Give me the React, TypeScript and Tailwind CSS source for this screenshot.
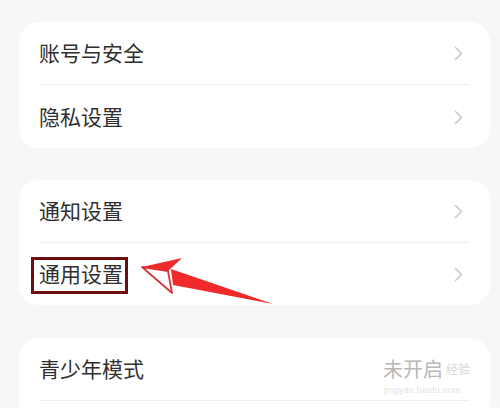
import React from 'react';

const font = { fontFamily: '"Noto Sans CJK SC", "Noto Sans", sans-serif' };

function Chevron() {
  return (
    <svg width="9" height="15" viewBox="0 0 9 15" className="shrink-0">
      <path d="M1.5 1.5l6 6-6 6" fill="none" stroke="#c9c9c9" strokeWidth="1.6" strokeLinecap="round" strokeLinejoin="round" />
    </svg>
  );
}

function Row({ label, value, boxed }: { label: string; value?: string; boxed?: boolean }) {
  return (
    <div className="relative flex h-[62px] items-center justify-between pl-[20px] pr-[27px]">
      <span className="-mt-[2px] text-[21px] leading-none text-[#2f2f2f]">{label}</span>
      {value ? (
        <span className="mr-[20px] text-[20px] leading-none text-[#b8b8b8]">{value}</span>
      ) : (
        <Chevron />
      )}
      {boxed && (
        <div className="absolute left-[12px] top-[14px] h-[37px] w-[97px] border-[3px] border-[#6e0d10]" />
      )}
    </div>
  );
}

function Divider() {
  return <div className="mx-[21px] h-px bg-[#eeeeee]" />;
}

export default function App() {
  return (
    <div className="relative h-[408px] w-[500px] overflow-hidden bg-[#f7f7f7] pt-[22px]" style={font}>
      <div className="ml-[19px] mr-[10px] rounded-[20px] bg-white">
        <Row label="账号与安全" />
        <Divider />
        <div className="h-px" />
        <Row label="隐私设置" />
      </div>

      <div className="ml-[19px] mr-[10px] mt-[32px] rounded-[20px] bg-white">
        <Row label="通知设置" />
        <Divider />
        <Row label="通用设置" boxed />
      </div>

      <div className="ml-[19px] mr-[10px] mt-[33px] rounded-[20px] bg-white">
        <Row label="青少年模式" value="未开启" />
        <Divider />
        <div className="h-[20px]" />
      </div>

      {/* watermark */}
      <span className="pointer-events-none absolute left-[446px] top-[363px] text-[12px] leading-none text-[#d6d6d6]">经验</span>
      <span className="pointer-events-none absolute left-[384px] top-[386px] text-[9px] leading-none tracking-wide text-[#e2e2e2]" style={{ fontFamily: '"Liberation Sans", sans-serif' }}>
        jingyan.baidu.com
      </span>

      {/* red arrow */}
      <svg className="pointer-events-none absolute left-0 top-0" width="500" height="408" viewBox="0 0 500 408">
        <polygon points="142,267 168,271 172,293" fill="#fff" stroke="#d9353a" strokeWidth="1.8" strokeLinejoin="round" />
        <polygon points="142,267 182,258 168,271" fill="#ef2a2a" />
        <polygon points="171,269 273,304 173,285" fill="#ef2a2a" />
      </svg>
    </div>
  );
}
